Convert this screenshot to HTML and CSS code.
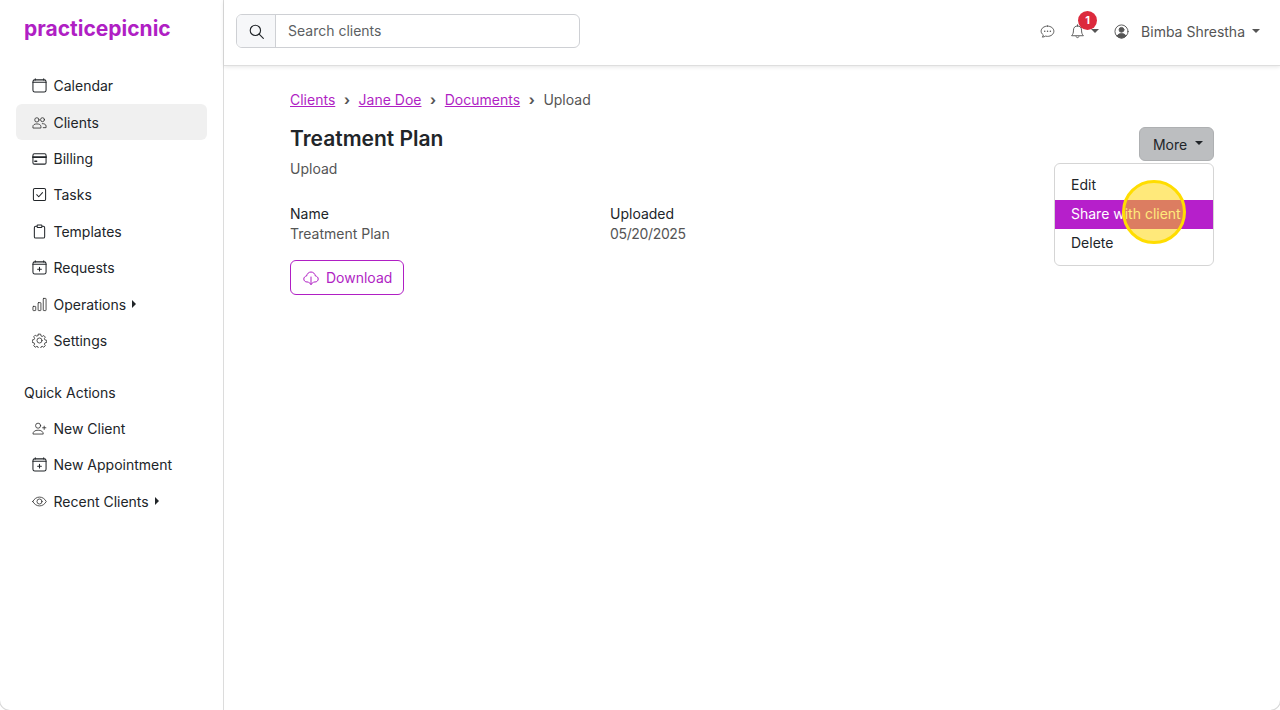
FILE: index.html
```html
<!DOCTYPE html>
<html lang="en">
<head>
<meta charset="utf-8">
<title>Treatment Plan</title>
<link rel="stylesheet" href="styles.css">
</head>
<body>
<div class="app">
  <aside class="sidebar">
    <div class="logo">practicepicnic</div>
    <nav class="nav">
      <a class="nav-item"><svg class="ico" viewBox="0 0 16 16"><rect x="1" y="2" width="14" height="13" rx="2"/><path d="M1 4.500h14M3.500 .7v1.500M12.500 .7v1.500"/></svg>Calendar</a>
      <a class="nav-item active"><svg class="ico thin" viewBox="0 0 16 16"><circle cx="5.200" cy="5.200" r="2.300"/><circle cx="11.200" cy="5" r="2.100"/><path d="M1 13.500v-1.300c0-1.700 1.700-2.700 4.200-2.700s4.300 1 4.300 2.700v1.300zM11 9.200c2.300 0 4 .9 4 2.600v1.700h-3"/></svg>Clients</a>
      <a class="nav-item"><svg class="ico" viewBox="0 0 16 16"><rect x="1" y="3" width="14" height="11" rx="1.500"/><path d="M1 6.500h14" stroke-width="2"/><path d="M3 11h2" stroke-width="1.500"/></svg>Billing</a>
      <a class="nav-item"><svg class="ico" viewBox="0 0 16 16"><rect x="1.500" y="1.500" width="13" height="13" rx="1.500"/><path d="M5 8.200l2.200 2.200L11.200 6"/></svg>Tasks</a>
      <a class="nav-item"><svg class="ico" viewBox="0 0 16 16"><path d="M5 2.500H4a1.500 1.500 0 0 0-1.500 1.500v9.500A1.500 1.500 0 0 0 4 15h8a1.500 1.500 0 0 0 1.500-1.500V4A1.500 1.500 0 0 0 12 2.500h-1"/><rect x="5.500" y="1" width="5" height="2.800" rx=".6"/></svg>Templates</a>
      <a class="nav-item"><svg class="ico" viewBox="0 0 16 16"><rect x="1" y="2" width="14" height="13" rx="2"/><path d="M1 4.500h14M3.500 .7v1.500M12.500 .7v1.500M8 7.800v4M6 9.800h4"/></svg>Requests</a>
      <a class="nav-item"><svg class="ico thin" viewBox="0 0 16 16"><rect x="1" y="10" width="3" height="4.500" rx=".5"/><rect x="6.500" y="6" width="3" height="8.500" rx=".5"/><rect x="12" y="1.500" width="3" height="13" rx=".5"/></svg>Operations<span class="caret-right"></span></a>
      <a class="nav-item"><svg class="ico thin" viewBox="0 0 16 16"><circle cx="8" cy="8" r="2.700"/><path d="M6.800 1.200h2.400l.4 1.900 1.300.6 1.700-1 1.600 1.700-1 1.600.6 1.400 1.900.4v2.300l-1.900.4-.6 1.400 1 1.600-1.600 1.700-1.700-1-1.300.6-.4 1.900H6.800l-.4-1.900-1.300-.6-1.700 1-1.600-1.700 1-1.600-.6-1.400-1.900-.4V7.400l1.900-.4.6-1.400-1-1.600 1.600-1.700 1.700 1 1.300-.6z"/></svg>Settings</a>
    </nav>
    <div class="nav-title">Quick Actions</div>
    <nav class="nav">
      <a class="nav-item"><svg class="ico thin" viewBox="0 0 16 16"><circle cx="6.500" cy="5" r="2.700"/><path d="M1 13.500c0-2.300 2.300-3.700 5.500-3.700s5.500 1.400 5.500 3.700zM13 5.500v3.500M11.300 7.200h3.500"/></svg>New Client</a>
      <a class="nav-item"><svg class="ico" viewBox="0 0 16 16"><rect x="1" y="2" width="14" height="13" rx="2"/><path d="M1 4.500h14M3.500 .7v1.500M12.500 .7v1.500M8 7.800v4M6 9.800h4"/></svg>New Appointment</a>
      <a class="nav-item"><svg class="ico thin" viewBox="0 0 16 16"><path d="M.8 8C2.500 5 5 3.300 8 3.300S13.500 5 15.200 8c-1.700 3-4.200 4.700-7.200 4.700S2.500 11 .8 8z"/><circle cx="8" cy="8" r="2.700"/></svg>Recent Clients<span class="caret-right"></span></a>
    </nav>
  </aside>
  <div class="main">
    <header class="topbar">
      <div class="search">
        <span class="search-addon"><svg class="ico dark" viewBox="0 0 16 16"><circle cx="6.800" cy="6.800" r="5.500"/><path d="M10.800 10.800l4.500 4.500"/></svg></span>
        <span class="search-input">Search clients</span>
      </div>
      <div class="top-actions">
        <svg class="ico grey" viewBox="0 0 16 16"><path d="M8 2.200c3.700 0 6.800 2.400 6.800 5.500S11.700 13.200 8 13.200c-.8 0-1.500-.1-2.200-.3-.8.6-1.900 1-3.300 1.100.6-.8 1-1.600 1-2.400C2.100 10.600 1.200 9.200 1.200 7.700 1.200 4.600 4.300 2.200 8 2.200z"/><path d="M5 7.700h.1M8 7.700h.1M11 7.700h.1" stroke-width="1.500"/></svg>
        <span class="bell">
          <svg class="ico grey" viewBox="0 0 16 16"><path d="M8 2c-2.700 0-4.300 2-4.300 4.500 0 3-.7 4.700-2 6h12.600c-1.300-1.300-2-3-2-6C12.300 4 10.700 2 8 2zM8 .8V2M6.500 13.500a1.600 1.600 0 0 0 3 0"/></svg>
          <span class="badge">1</span>
          <span class="caret small"></span>
        </span>
        <span class="user">
          <svg class="ico grey" viewBox="0 0 16 16"><circle cx="8" cy="8" r="7"/><circle cx="8" cy="6.200" r="2.600" fill="#555"/><path d="M3.300 12.700C4.300 10.900 6 10.200 8 10.200s3.700.7 4.700 2.500A7 7 0 0 1 8 15a7 7 0 0 1-4.700-2.300z" fill="#555"/></svg>
          Bimba Shrestha<span class="caret"></span>
        </span>
      </div>
    </header>
    <main class="content">
      <div class="crumbs">
        <a class="crumb-link">Clients</a><span class="sep">›</span>
        <a class="crumb-link">Jane Doe</a><span class="sep">›</span>
        <a class="crumb-link">Documents</a><span class="sep">›</span>
        <span>Upload</span>
      </div>
      <div class="head">
        <div>
          <h1 class="title">Treatment Plan</h1>
          <div class="subtitle">Upload</div>
        </div>
        <div class="more-wrap">
          <button class="more">More<span class="caret dark-caret"></span></button>
          <div class="menu">
            <div class="menu-item">Edit</div>
            <div class="menu-item selected">Share with client</div>
            <div class="menu-item">Delete</div>
          </div>
          <div class="spot"></div>
        </div>
      </div>
      <div class="fields">
        <div class="field">
          <div class="label">Name</div>
          <div class="value">Treatment Plan</div>
        </div>
        <div class="field">
          <div class="label">Uploaded</div>
          <div class="value date">05/20/2025</div>
        </div>
      </div>
      <button class="download"><svg class="ico purple" viewBox="0 0 16 16"><path d="M5 12H4C2.200 12 .8 10.700.8 9c0-1.600 1.200-2.800 2.800-3C4 3.700 5.800 2 8 2s4 1.700 4.400 4c1.600.2 2.800 1.400 2.800 3 0 1.700-1.400 3-3.200 3h-1M8 7v7.500M5.800 12.300L8 14.500l2.200-2.200"/></svg>Download</button>
    </main>
  </div>
</div>
</body>
</html>
```
FILE: styles.css
```css
* { box-sizing: border-box; }
html, body { margin: 0; height: 100%; overflow: hidden; background: #fff; }
body { font-family: Inter, "Liberation Sans", sans-serif; font-size: 14px; font-weight: 420; color: #212529; }
.app { display: flex; height: 710px; width: 1280px; border-radius: 0 0 10px 10px; box-shadow: 0 0 0 1px #d8d8d8; overflow: hidden; }

.sidebar { width: 224px; flex: none; border-right: 1px solid #dcdcdc; padding: 0 16px; }
.logo { height: 67.500px; padding: 15px 0 0 8px; font-size: 21px; line-height: 27px; font-weight: 700; color: #b01fc4; }
.nav { display: flex; flex-direction: column; }
.nav-item { display: flex; align-items: center; height: 36.400px; padding-left: 16px; border-radius: 6px; color: #212529; }
.nav-item.active { background: #f0f0f0; }
.nav-title { margin: 23px 0 7.500px; height: 21px; line-height: 21px; padding-left: 8px; color: #212529; }

.ico { width: 15px; height: 15px; flex: none; margin-right: 7px; margin-left: -.5px; fill: none; stroke: #212529; stroke-width: 1.100; stroke-linecap: round; stroke-linejoin: round; }
.ico.thin { stroke-width: .9; stroke: #333; }
.ico.dark { margin: 0; width: 15px; height: 15px; stroke-width: 1.200; }
.ico.grey { stroke: #555; margin: 0; stroke-width: 1; }
.ico.purple { stroke: #b01fc4; width: 16px; height: 16px; margin: 0 7px 0 0; stroke-width: 1; }

.caret-right { margin-left: 6px; border-left: 4px solid #212529; border-top: 4px solid transparent; border-bottom: 4px solid transparent; }
.caret { display: inline-block; margin-left: 8px; border-top: 4px solid #555; border-left: 4px solid transparent; border-right: 4px solid transparent; }
.caret.small { margin-left: 6px; margin-bottom: 0; }
.dark-caret { border-top-color: #212529; margin-bottom: 3px; }

.main { flex: 1; min-width: 0; display: flex; flex-direction: column; }
.topbar { height: 66px; flex: none; display: flex; align-items: center; justify-content: space-between; padding: 0 20px 3px 12px; border-bottom: 1px solid #dedede; box-shadow: 0 1px 4px rgba(0,0,0,.1); }
.search { display: flex; width: 344px; height: 34px; border: 1px solid #ced0d4; border-radius: 6px; overflow: hidden; }
.search-addon { width: 39px; flex: none; display: flex; align-items: center; justify-content: center; background: #f6f7f9; border-right: 1px solid #ced0d4; }
.search-input { flex: 1; display: flex; align-items: center; padding: 0 0 1px 12px; color: #5c5f63; }
.top-actions { display: flex; align-items: center; color: #555; }
.bell { position: relative; display: flex; align-items: center; margin-left: 15px; }
.badge { position: absolute; left: 8px; top: -13px; width: 19px; height: 19px; border-radius: 50%; background: #dc2a3d; color: #fff; font-size: 11px; font-weight: 700; line-height: 19px; text-align: center; }
.user { display: flex; align-items: center; gap: 12px; margin-left: 15px; }
.user .caret { margin-left: -5px; }

.content { flex: 1; padding: 23px 66px 0; }
.crumbs { display: flex; align-items: center; height: 21px; color: #555; }
.crumb-link { color: #b01fc4; text-decoration: underline; }
.sep { width: 23.300px; text-align: center; font-weight: 700; }
.head { display: flex; justify-content: space-between; align-items: flex-start; margin-top: 14px; }
.title { margin: 0; font-size: 21px; line-height: 30px; font-weight: 600; color: #212529; }
.subtitle { margin-top: 4px; line-height: 21px; color: #555; }
.more-wrap { position: relative; margin-top: 3px; }
.more { display: flex; align-items: center; justify-content: center; width: 75px; height: 34px; padding: 0 0 0 3px; background: #bcbec0; border: 1px solid #aeb0b2; border-radius: 6px; font: inherit; color: #212529; }
.more .caret { margin-left: 8px; }
.menu { position: absolute; right: 0; top: 36px; width: 160px; height: 103px; padding: 7px 0; background: #fff; border: 1px solid #d5d5d5; border-radius: 6px; z-index: 2; }
.menu-item { height: 29px; line-height: 28px; padding-left: 16px; color: #212529; }
.menu-item.selected { background: #b61fcb; color: #fff; }
.spot { position: absolute; left: -17px; top: 53px; width: 64px; height: 64px; border-radius: 50%; background: rgba(255,213,0,.52); border: 3px solid #ffdd00; z-index: 3; }

.fields { display: flex; margin-top: 25px; }
.field { width: 320px; }
.label { line-height: 20px; color: #212529; }
.value { line-height: 20px; color: #555; }
.date { letter-spacing: -.35px; }
.download { display: flex; align-items: center; margin-top: 16px; height: 35px; width: 114px; padding: 0 0 0 12px; background: #fff; border: 1px solid #b01fc4; border-radius: 6px; font: inherit; color: #b01fc4; }
```
